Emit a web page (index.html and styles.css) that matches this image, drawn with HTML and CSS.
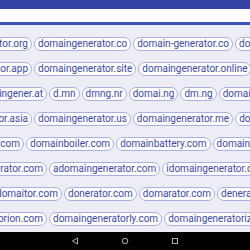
FILE: index.html
```html
<!DOCTYPE html>
<html lang="en">
<head>
  <meta charset="UTF-8">
  <meta name="viewport" content="width=device-width, initial-scale=1.0">
  <title>Domain Generator</title>
  <link rel="stylesheet" href="styles.css">
</head>
<body>

<div class="screen">
  <div class="appbar"></div>
  <div class="search"></div>

  <div class="results">
    <div class="row">
      <div class="lead lead-32"><span class="chip">domaingenerator.org</span></div>
      <span class="chip">domaingenerator.co</span>
      <span class="chip">domain-generator.co</span>
      <span class="chip">domaingenerator.net</span>
    </div>
    <div class="row">
      <div class="lead lead-32"><span class="chip">domaingenerator.app</span></div>
      <span class="chip">domaingenerator.site</span>
      <span class="chip">domaingenerator.online</span>
    </div>
    <div class="row">
      <div class="lead lead-47"><span class="chip">domaingener.at</span></div>
      <span class="chip">d.mn</span>
      <span class="chip">dmng.nr</span>
      <span class="chip">domai.ng</span>
      <span class="chip">dm.ng</span>
      <span class="chip">domaingenerator.io</span>
    </div>
    <div class="row">
      <div class="lead lead-32"><span class="chip">domaingenerator.asia</span></div>
      <span class="chip">domaingenerator.us</span>
      <span class="chip">domaingenerator.me</span>
      <span class="chip">domaingenerator.info</span>
    </div>
    <div class="row">
      <div class="lead lead-24"><span class="chip">domaingenerator.com</span></div>
      <span class="chip">domainboiler.com</span>
      <span class="chip">domainbattery.com</span>
      <span class="chip">domainmachine.com</span>
    </div>
    <div class="row">
      <div class="lead lead-47"><span class="chip">mydomaingenerator.com</span></div>
      <span class="chip">adomaingenerator.com</span>
      <span class="chip">idomaingenerator.com</span>
    </div>
    <div class="row">
      <div class="lead lead-62"><span class="chip">domaitor.com</span></div>
      <span class="chip">donerator.com</span>
      <span class="chip">domarator.com</span>
      <span class="chip">denerator.com</span>
    </div>
    <div class="row">
      <div class="lead lead-47"><span class="chip">domainorion.com</span></div>
      <span class="chip">domaingeneratorly.com</span>
      <span class="chip">domaingeneratorize.com</span>
    </div>
  </div>

  <div class="navbar">
    <svg width="8" height="8" viewBox="0 0 8 8"><path d="M6.5 1 L1.5 4 L6.5 7 Z" fill="none" stroke="#b0b0b0" stroke-width="1"/></svg>
    <svg width="8" height="8" viewBox="0 0 8 8"><circle cx="4" cy="4" r="2.8" fill="none" stroke="#b0b0b0" stroke-width="1"/></svg>
    <svg width="8" height="8" viewBox="0 0 8 8"><rect x="1.5" y="1.5" width="5" height="5" fill="none" stroke="#b0b0b0" stroke-width="1"/></svg>
  </div>
</div>

</body>
</html>
```

FILE: styles.css
```css
body { margin: 0; font-family: Roboto, "Liberation Sans", sans-serif; background-color: #000; }
.screen { width: 250px; height: 250px; display: flex; flex-direction: column; overflow: hidden; }
.appbar { height: 9px; background-color: #3442a3; flex: none; }
.search { height: 13px; background-color: #ffffff; border-bottom: 3px solid #3f51b5; flex: none; }
.results { flex: 1; background-color: #ededf5; padding-top: 12px; display: flex; flex-direction: column; gap: 11px; overflow: hidden; }
.row { display: flex; gap: 2px; height: 14px; white-space: nowrap; }
.lead { display: flex; justify-content: flex-end; overflow: hidden; flex: none; }
.lead-24 { width: 24px; }
.lead-32 { width: 32px; }
.lead-47 { width: 47px; }
.lead-62 { width: 62px; }
.chip { flex: none; height: 14px; box-sizing: border-box; padding: 0 3px; border: 1px solid #a9b0e0; border-radius: 7px; background-color: #ffffff; color: #3949ab; font-size: 10px; line-height: 12px; }
.navbar { height: 18px; flex: none; background-color: #000; display: flex; justify-content: center; align-items: center; gap: 42px; }
```
